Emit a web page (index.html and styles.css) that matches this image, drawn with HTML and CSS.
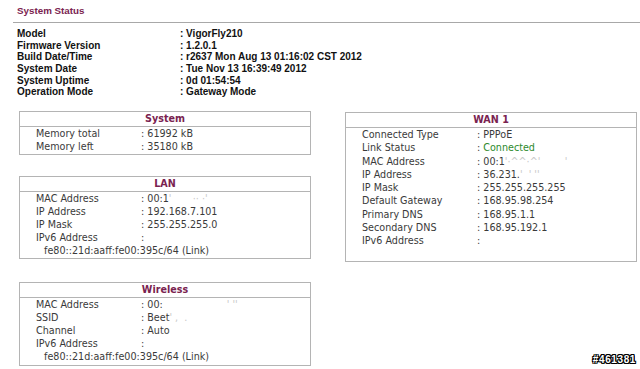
FILE: index.html
```html
<!DOCTYPE html>
<html>
<head>
    <link rel="stylesheet" href="styles.css">
</head>
<body>
    <div class="page">
        <div class="title">System Status</div>

        <div class="info">
            <div class="info-row"><span class="info-label">Model</span><span>: VigorFly210</span></div>
            <div class="info-row"><span class="info-label">Firmware Version</span><span>: 1.2.0.1</span></div>
            <div class="info-row"><span class="info-label">Build Date/Time</span><span>: r2637 Mon Aug 13 01:16:02 CST 2012</span></div>
            <div class="info-row"><span class="info-label">System Date</span><span>: Tue Nov 13 16:39:49 2012</span></div>
            <div class="info-row"><span class="info-label">System Uptime</span><span>: 0d 01:54:54</span></div>
            <div class="info-row"><span class="info-label">Operation Mode</span><span>: Gateway Mode</span></div>
        </div>

        <div class="columns">
            <div class="column">
                <!-- System -->
                <div class="box box-system">
                    <div class="box-head">System</div>
                    <div class="row"><span class="label">Memory total</span><span>: 61992 kB</span></div>
                    <div class="row"><span class="label">Memory left</span><span>: 35180 kB</span></div>
                </div>

                <!-- LAN -->
                <div class="box box-lan">
                    <div class="box-head">LAN</div>
                    <div class="row"><span class="label">MAC Address</span><span>: 00:1<span class="blur">'&nbsp;&nbsp;&nbsp;&nbsp;&nbsp;&nbsp;&nbsp;·· ·'</span></span></div>
                    <div class="row"><span class="label">IP Address</span><span>: 192.168.7.101</span></div>
                    <div class="row"><span class="label">IP Mask</span><span>: 255.255.255.0</span></div>
                    <div class="row"><span class="label">IPv6 Address</span><span>:</span></div>
                    <div class="row row-sub">fe80::21d:aaff:fe00:395c/64 (Link)</div>
                </div>

                <!-- Wireless -->
                <div class="box box-wireless">
                    <div class="box-head">Wireless</div>
                    <div class="row"><span class="label">MAC Address</span><span>: 00:<span class="blur">&nbsp;&nbsp;&nbsp;&nbsp;&nbsp;&nbsp;&nbsp;&nbsp;&nbsp;&nbsp;&nbsp;&nbsp;&nbsp;&nbsp;&nbsp;&nbsp;&nbsp;&nbsp;&nbsp;&nbsp;&nbsp;' ''</span></span></div>
                    <div class="row"><span class="label">SSID</span><span>: Beet<span class="blur">' ,&nbsp;&nbsp;.</span></span></div>
                    <div class="row"><span class="label">Channel</span><span>: Auto</span></div>
                    <div class="row"><span class="label">IPv6 Address</span><span>:</span></div>
                    <div class="row row-sub">fe80::21d:aaff:fe00:395c/64 (Link)</div>
                </div>
            </div>

            <div class="column">
                <!-- WAN 1 -->
                <div class="box box-wan">
                    <div class="box-head">WAN 1</div>
                    <div class="row"><span class="label">Connected Type</span><span>: PPPoE</span></div>
                    <div class="row"><span class="label">Link Status</span><span>: <span class="ok">Connected</span></span></div>
                    <div class="row"><span class="label">MAC Address</span><span>: 00:1<span class="blur">'·^^·^'&nbsp;&nbsp;&nbsp;&nbsp;&nbsp;&nbsp;&nbsp;&nbsp;'</span></span></div>
                    <div class="row"><span class="label">IP Address</span><span>: 36.231.<span class="blur">'&nbsp;&nbsp;' ''</span></span></div>
                    <div class="row"><span class="label">IP Mask</span><span>: 255.255.255.255</span></div>
                    <div class="row"><span class="label">Default Gateway</span><span>: 168.95.98.254</span></div>
                    <div class="row"><span class="label">Primary DNS</span><span>: 168.95.1.1</span></div>
                    <div class="row"><span class="label">Secondary DNS</span><span>: 168.95.192.1</span></div>
                    <div class="row"><span class="label">IPv6 Address</span><span>:</span></div>
                </div>
            </div>
        </div>
    </div>

    <div class="stamp">#461381</div>
</body>
</html>
```

FILE: styles.css
```css
body {
    margin: 0;
    padding: 0;
    background: #ffffff;
    color: #333333;
    font-family: "DejaVu Sans", Verdana, sans-serif;
    width: 640px;
    height: 369px;
    overflow: hidden;
    position: relative;
}

.page {
    padding-top: 6px;
}

/* header block */
.title {
    margin-left: 13px;
    padding: 0 0 6px 4px;
    border-bottom: 1px solid #a8a8a8;
    font-family: "Liberation Sans", Arial, sans-serif;
    font-weight: bold;
    font-size: 9.8px;
    line-height: 10px;
    color: #7a2350;
}

.info {
    padding: 5px 0 0 17px;
    font-family: "Liberation Sans", Arial, sans-serif;
    font-weight: bold;
    font-size: 10px;
    color: #111111;
}

.info-row {
    display: flex;
    height: 11.7px;
    line-height: 11.7px;
}

.info-label {
    width: 163px;
}

/* status boxes */
.columns {
    display: flex;
    gap: 34px;
    padding: 13px 0 0 19px;
}

.column {
    width: 292px;
    display: flex;
    flex-direction: column;
}

.box {
    border: 1px solid #b4b4b4;
    font-size: 9.6px;
    color: #3a3a3a;
}

.box-head {
    height: 14px;
    line-height: 14px;
    border-bottom: 1px solid #b4b4b4;
    text-align: center;
    font-weight: bold;
    color: #7a2350;
}

.row {
    display: flex;
    height: 13px;
    line-height: 13px;
    padding-left: 16px;
    white-space: pre;
}

.label {
    width: 105px;
}

.row-sub {
    padding-left: 24px;
}

.blur {
    color: #c8c8c8;
}

.ok {
    color: #2e8a2e;
}

.box-system {
    height: 42px;
}

.box-lan {
    margin-top: 21px;
    height: 81px;
}

.box-wireless {
    margin-top: 23px;
    height: 82px;
}

.box-wan {
    margin-top: 1px;
    height: 148px;
}

.box-wan .row {
    height: 13.25px;
}

.box-wan .label {
    width: 115px;
}

.stamp {
    position: absolute;
    right: 4px;
    bottom: 4px;
    font-family: "Liberation Sans", Arial, sans-serif;
    font-weight: bold;
    font-size: 10px;
    line-height: 10px;
    letter-spacing: 0.6px;
    color: #ffffff;
    text-shadow: 1px 0 #000, -1px 0 #000, 0 1px #000, 0 -1px #000, 1px 1px #000, -1px -1px #000, 1px -1px #000, -1px 1px #000;
}
```
